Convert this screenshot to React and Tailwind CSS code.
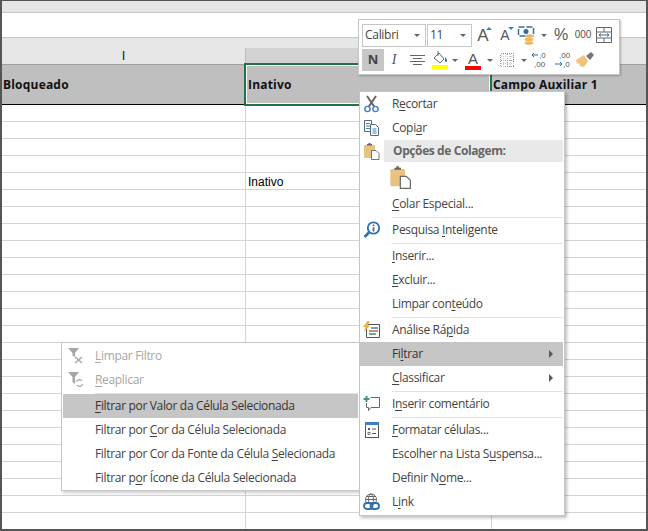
import React from 'react';

const menuFont = "font-['Open_Sans','Noto_Sans',sans-serif] text-[12px] tracking-[-0.33px]";

function Scissors() {
  return (
    <svg width="18" height="18" viewBox="0 0 18 18" fill="none">
      <path d="M4 1l7.500 11M13 1L5.500 12" stroke="#666" strokeWidth="2" />
      <circle cx="4.500" cy="14" r="2.600" stroke="#3f7fbf" strokeWidth="1.400" />
      <circle cx="12.500" cy="14" r="2.600" stroke="#3f7fbf" strokeWidth="1.400" />
    </svg>
  );
}

function CopyIcon() {
  return (
    <svg width="18" height="18" viewBox="0 0 18 18" fill="none" stroke="#5a6a7a">
      <path d="M1.500 1.500h7v11h-7z" fill="#fff" />
      <path d="M3 4.500h4M3 7h4M3 9.500h4" stroke="#3f7fbf" />
      <path d="M7.500 5.500h5l3 3v8h-8z" fill="#fff" />
      <path d="M9.500 10h4M9.500 12h4M9.500 14h4" stroke="#3f7fbf" />
    </svg>
  );
}

function PasteIcon({ big }) {
  const s = big ? 24 : 18;
  return (
    <svg width={s} height={s} viewBox="0 0 18 18" fill="none">
      <rect x="1" y="3" width="11" height="13" rx="1" fill="#e9c27f" />
      <path d="M4 3.500V2h1.500V1h2v1H9v1.500z" fill="#666" />
      <path d="M8.500 8.500h4.500l3 3v6H8.500z" fill="#fff" stroke="#666" strokeWidth="0.900" />
    </svg>
  );
}

function LookupIcon() {
  return (
    <svg width="18" height="18" viewBox="0 0 18 18" fill="none">
      <circle cx="10.500" cy="7" r="5.700" stroke="#2f6fa8" strokeWidth="1.800" />
      <path d="M6 11.500L1.500 16" stroke="#2f6fa8" strokeWidth="2.600" />
      <path d="M10.500 3.500v1.500M10.500 6.200v4.300" stroke="#555" strokeWidth="1.600" />
    </svg>
  );
}

function QuickIcon() {
  return (
    <svg width="18" height="18" viewBox="0 0 18 18" fill="none">
      <path d="M3.500 3.500h13v13h-13z" fill="#fff" stroke="#555" />
      <path d="M8 7h7" stroke="#3f7fbf" strokeWidth="1.500" />
      <path d="M6 10h9" stroke="#d0603a" strokeWidth="1.500" />
      <path d="M6 13h7" stroke="#3c8f6a" strokeWidth="1.500" />
      <path d="M4.500 0L0 6h2.500L1 11l6-6.500H4.500L7 0z" fill="#f0b040" />
    </svg>
  );
}

function CommentIcon() {
  return (
    <svg width="18" height="18" viewBox="0 0 18 18" fill="none">
      <path d="M7.500 2.500h9v10H8L5.500 15.500v-3H3.500V8" stroke="#666" />
      <path d="M3.500 1v6M.5 4h6" stroke="#3c9a78" strokeWidth="2" />
    </svg>
  );
}

function FormatIcon() {
  return (
    <svg width="16" height="18" viewBox="0 0 16 18" fill="none">
      <rect x="1.500" y="2.500" width="13" height="14" fill="#fff" stroke="#555" />
      <rect x="1" y="1" width="14" height="3" fill="#3f7fbf" />
      <rect x="4" y="7" width="2" height="2" fill="#555" />
      <rect x="4" y="11.500" width="2" height="2" stroke="#555" strokeWidth="0.700" />
      <path d="M8 8h4M8 12.500h4" stroke="#555" />
    </svg>
  );
}

function LinkIcon() {
  return (
    <svg width="18" height="18" viewBox="0 0 18 18" fill="none">
      <circle cx="8" cy="6.500" r="5.500" stroke="#666" />
      <ellipse cx="8" cy="6.500" rx="2.500" ry="5.500" stroke="#666" />
      <path d="M2.500 6.500h11M3.500 3.500h9" stroke="#666" />
      <rect x="1" y="10" width="8.500" height="6" rx="3" fill="#fff" stroke="#2f6fa8" strokeWidth="1.800" />
      <rect x="7.500" y="10" width="8.500" height="6" rx="3" stroke="#2f6fa8" strokeWidth="1.800" />
    </svg>
  );
}

function FunnelClear() {
  return (
    <svg width="18" height="18" viewBox="0 0 18 18" fill="none">
      <path d="M2 1h11L9 6v4L6.500 8.500V6z" fill="#a6a6a6" />
      <path d="M9 10l7 6M16 10l-7 6" stroke="#a6a6a6" strokeWidth="1.500" />
    </svg>
  );
}

function FunnelApply() {
  return (
    <svg width="18" height="18" viewBox="0 0 18 18" fill="none">
      <path d="M2 1h11L9 6v7L6.500 11V6z" fill="#a6a6a6" />
      <path d="M10.500 11a3 3 0 0 1 5.500-1M16.500 13a3 3 0 0 1-5.500 1" stroke="#a6a6a6" strokeWidth="1.300" />
    </svg>
  );
}

function Caret() {
  return <span className="w-0 h-0 border-y-[4px] border-y-transparent border-l-[4px] border-l-[#5a5a5a]" />;
}

function Down({ w = 'w-[12px]' }) {
  return (
    <span className={`${w} flex justify-center`}>
      <span className="w-0 h-0 border-x-[3px] border-x-transparent border-t-[3px] border-t-[#666]" />
    </span>
  );
}

function Item({ icon, children, active, disabled, arrow }) {
  return (
    <div className={`h-[24px] flex items-center ${active ? 'bg-[#c6c6c6] text-[#333]' : ''} ${disabled ? 'text-[#a6a6a6]' : ''}`}>
      <span className="w-[32px] shrink-0 flex justify-center pr-[8px]">{icon}</span>
      <span className="flex-1 whitespace-nowrap [&_u]:underline-offset-2">{children}</span>
      {arrow && <span className="mr-[10px] flex"><Caret /></span>}
    </div>
  );
}

function Sep() {
  return <div className="h-[2px] ml-[32px] border-b border-[#e1e1e1]" />;
}

function MainMenu() {
  return (
    <div className={`absolute left-[359px] top-[91px] w-[206px] bg-white border border-[#c6c6c6] shadow-[2px_2px_3px_rgba(0,0,0,0.25)] pr-px pb-px text-[#444] z-20 ${menuFont}`}>
      <Item icon={<Scissors />}>R<u>e</u>cortar</Item>
      <Item icon={<CopyIcon />}>Copi<u>a</u>r</Item>
      <div className="h-[22px] flex items-center">
        <span className="w-[24px] shrink-0 flex justify-center"><PasteIcon /></span>
        <span className="flex-1 h-full flex items-center bg-[#e9e9e9] pl-[9px] font-bold text-[#666] tracking-[-0.4px]">Opções de Colagem:</span>
      </div>
      <div className="h-[30px] pl-[29px] flex items-center"><PasteIcon big /></div>
      <Item><u>C</u>olar Especial...</Item>
      <Sep />
      <Item icon={<LookupIcon />}>Pesquisa <u>I</u>nteligente</Item>
      <Sep />
      <Item><u>I</u>nserir...</Item>
      <Item><u>E</u>xcluir...</Item>
      <Item>Limpar con<u>t</u>eúdo</Item>
      <Sep />
      <Item icon={<QuickIcon />}>Análise Rá<u>p</u>ida</Item>
      <Item active arrow>Fi<u>l</u>trar</Item>
      <Item arrow><u>C</u>lassificar</Item>
      <Sep />
      <Item icon={<CommentIcon />}>I<u>n</u>serir comentário</Item>
      <Sep />
      <Item icon={<FormatIcon />}><u>F</u>ormatar células...</Item>
      <Item>Escolher na Lista S<u>u</u>spensa...</Item>
      <Item>Definir N<u>o</u>me...</Item>
      <Item icon={<LinkIcon />}>L<u>i</u>nk</Item>
    </div>
  );
}

function SubMenu() {
  return (
    <div className={`absolute left-[61px] top-[342px] w-[299px] bg-white border border-[#c6c6c6] shadow-[2px_2px_3px_rgba(0,0,0,0.2)] pl-px pr-px pt-px text-[#444] z-10 ${menuFont}`}>
      <Item disabled icon={<FunnelClear />}><u>L</u>impar Filtro</Item>
      <Item disabled icon={<FunnelApply />}><u>R</u>eaplicar</Item>
      <Sep />
      <Item active><u>F</u>iltrar por Valor da Célula Selecionada</Item>
      <Item>Filtrar por <u>C</u>or da Célula Selecionada</Item>
      <Item>Filtrar por Cor da Fonte da Célula <u>S</u>elecionada</Item>
      <Item>Filtrar p<u>o</u>r Ícone da Célula Selecionada</Item>
    </div>
  );
}

function Combo({ w, label }) {
  return (
    <div className={`${w} h-[23px] border border-[#c6c6c6] flex items-center justify-between pl-[2px] pr-[5px] text-[12px] tracking-[-0.3px] text-[#444]`}>
      <span>{label}</span>
      <span className="w-0 h-0 border-x-[3px] border-x-transparent border-t-[3px] border-t-[#666]" />
    </div>
  );
}

function GrowA({ small, up }) {
  return (
    <span className="w-[22px] h-[22px] relative flex items-center justify-center">
      <span className={`${small ? 'text-[14px]' : 'text-[17px]'} leading-none text-[#555] font-['Liberation_Sans',sans-serif]`}>A</span>
      <span className={`absolute right-[2px] top-[3px] w-0 h-0 border-x-[3px] border-x-transparent ${up ? 'border-b-[3px] border-b-[#3f7fbf]' : 'border-t-[3px] border-t-[#3f7fbf]'}`} />
    </span>
  );
}

function MiniToolbar() {
  return (
    <div className={`absolute left-[358px] top-[19px] w-[262px] h-[56px] bg-white border border-[#c6c6c6] shadow-[1px_1px_2px_rgba(0,0,0,0.25)] pl-[3px] pt-[3px] z-30 font-['Open_Sans',sans-serif]`}>
      <div className="flex items-center h-[24px]">
        <Combo w="w-[64px]" label="Calibri" />
        <div className="w-px" />
        <Combo w="w-[45px]" label="11" />
        <GrowA up />
        <GrowA small />
        <span className="w-[22px] flex justify-center">
          <svg width="20" height="20" viewBox="0 0 20 20" fill="none">
            <path d="M1.500 2h15v9h-15z" stroke="#2f6fa8" strokeWidth="1.500" strokeDasharray="6 2" />
            <circle cx="9" cy="6.500" r="2.500" fill="#2f6fa8" />
            <ellipse cx="12" cy="11" rx="4.500" ry="1.800" fill="#e9b864" />
            <ellipse cx="12" cy="14.500" rx="4.500" ry="1.800" fill="#e9b864" />
            <ellipse cx="12" cy="18" rx="4.500" ry="1.800" fill="#e9b864" />
          </svg>
        </span>
        <Down />
        <span className="w-[22px] text-center text-[16px] leading-none text-[#555] font-['Liberation_Sans',sans-serif]">%</span>
        <span className="w-[22px] text-center text-[10px] leading-none text-[#555] font-['Liberation_Sans',sans-serif]">000</span>
        <span className="w-[20px] flex justify-center">
          <svg width="16" height="16" viewBox="0 0 16 16" fill="none">
            <path d="M.5.500h15v15H.5zM.5 5h15M.5 11h15M8 .5V5M8 11v4.500" stroke="#666" />
            <path d="M3 8h10M3 8l2-1.500M3 8l2 1.500M13 8l-2-1.500M13 8l-2 1.500" stroke="#2f6fa8" />
          </svg>
        </span>
      </div>
      <div className="flex items-center h-[22px] mt-[2px]">
        <span className="w-[22px] h-[22px] bg-[#c6c6c6] flex items-center justify-center text-[13px] font-bold text-[#444]">N</span>
        <span className="w-[20px] text-center text-[14px] italic leading-none text-[#555] font-['Liberation_Serif',serif]">I</span>
        <span className="w-[26px] flex justify-center">
          <svg width="15" height="12" viewBox="0 0 15 12" stroke="#666"><path d="M0 1.500h15M3 4.500h9M0 7.500h15M3 10.500h9" /></svg>
        </span>
        <span className="w-[20px] flex justify-center">
          <svg width="17" height="20" viewBox="0 0 17 20" fill="none">
            <path d="M2 8l5-5 5 6-4 4z" stroke="#666" />
            <path d="M6 1v5" stroke="#666" />
            <path d="M13 7c1.500 2 2.500 3 2 4.500-.8 1-2.500.5-2-1.500z" fill="#2f6fa8" />
            <rect x="0" y="15" width="16" height="4" fill="#ffff00" />
          </svg>
        </span>
        <Down w="w-[10px]" />
        <span className="w-[26px] flex flex-col items-center">
          <span className="text-[15px] leading-[15px] text-[#555] font-['Liberation_Sans',sans-serif]">A</span>
          <span className="w-[16px] h-[4px] bg-[#ff0000]" />
        </span>
        <Down w="w-[8px]" />
        <span className="w-[26px] flex justify-center">
          <svg width="14" height="14" viewBox="0 0 14 14" stroke="#999" strokeDasharray="1 1" fill="none" shapeRendering="crispEdges">
            <path d="M.5.500h13v13H.5zM7 .5v13M.5 7h13" />
            <path d="M3.500.5v13M10.500.5v13M.5 3.500h13M.5 10.500h13" stroke="#ccc" />
          </svg>
        </span>
        <Down w="w-[8px]" />
        <span className="w-[24px] flex justify-center">
          <svg width="18" height="18" viewBox="0 0 18 18" fill="none">
            <path d="M7 4H1M1 4l2-2M1 4l2 2" stroke="#2f6fa8" />
            <text x="8" y="7" fontSize="8" fill="#555" fontFamily="Liberation Sans">,0</text>
            <text x="3" y="16" fontSize="8" fill="#555" fontFamily="Liberation Sans">,00</text>
          </svg>
        </span>
        <span className="w-[22px] flex justify-center">
          <svg width="18" height="18" viewBox="0 0 18 18" fill="none">
            <text x="5" y="7" fontSize="8" fill="#555" fontFamily="Liberation Sans">,00</text>
            <path d="M1 13h7M8 13l-2-2M8 13l-2 2" stroke="#2f6fa8" />
            <text x="9" y="16" fontSize="8" fill="#555" fontFamily="Liberation Sans">,0</text>
          </svg>
        </span>
        <span className="w-[22px] flex justify-center">
          <svg width="18" height="16" viewBox="0 0 18 16" fill="none">
            <path d="M0 8l8-5 4 6-4 6-4-1-1-3-2 1z" fill="#f0c27a" />
            <path d="M10 4l5-4 3 3-4 5z" fill="#777" />
          </svg>
        </span>
      </div>
    </div>
  );
}

export default function App() {
  const rows = Array.from({ length: 25 }, (_, i) => i);

  return (
    <div className="relative w-[648px] h-[531px] overflow-hidden bg-white border-[#555] border-t border-x-2 border-b-2 font-['Liberation_Sans',sans-serif] text-black">
      {/* top strips */}
      <div className="h-[11px] bg-[#e6e6e6] border-b border-[#c6c6c6] box-content" />
      <div className="h-[24px] bg-white border-b border-[#c6c6c6] box-content" />

      {/* column letters */}
      <div className="h-[26px] flex bg-[#e6e6e6]">
        <div className="w-[243px] flex items-end justify-center h-full">
          <span className="text-[13px] leading-[16px] h-[16px] text-[#222]">I</span>
        </div>
        <div className="w-[246px] flex flex-col">
          <div className="h-[10px]" />
          <div className="h-[16px] bg-[#d2d2d2] border-l border-[#bdbdbd]" />
        </div>
      </div>

      {/* header row */}
      <div className="h-[41px] flex bg-[#bfbfbf] border-t border-[#9f9f9f] font-['Open_Sans',sans-serif] font-bold text-[12px] tracking-[0.2px] text-[#111]">
        <div className="w-[243px] flex items-center pl-px pt-px border-b border-black">Bloqueado</div>
        <div className="relative z-[1] w-[248px] -ml-px -mt-[2px] -mb-px border-2 border-[#217346]">
          <div className="h-full border border-white flex items-center pl-px pt-px">Inativo</div>
        </div>
        <div className="flex-1 flex items-center pl-px pt-px border-b border-black">Campo Auxiliar 1</div>
      </div>

      {/* cells */}
      {rows.map((r) => (
        <div key={r} className="h-[17px] flex border-b border-[#d4d4d4]">
          <div className="w-[244px] border-r border-[#d4d4d4]" />
          <div className="w-[246px] border-r border-[#d4d4d4] pl-[2px] text-[12px] leading-[18px]">
            {r === 4 ? 'Inativo' : ''}
          </div>
          <div className="flex-1" />
        </div>
      ))}

      {/* offsets below are relative to the frame's padding box */}
      <div className="absolute -left-[2px] -top-px w-[648px] h-[531px]">
        <MiniToolbar />
        <SubMenu />
        <MainMenu />
      </div>
    </div>
  );
}
